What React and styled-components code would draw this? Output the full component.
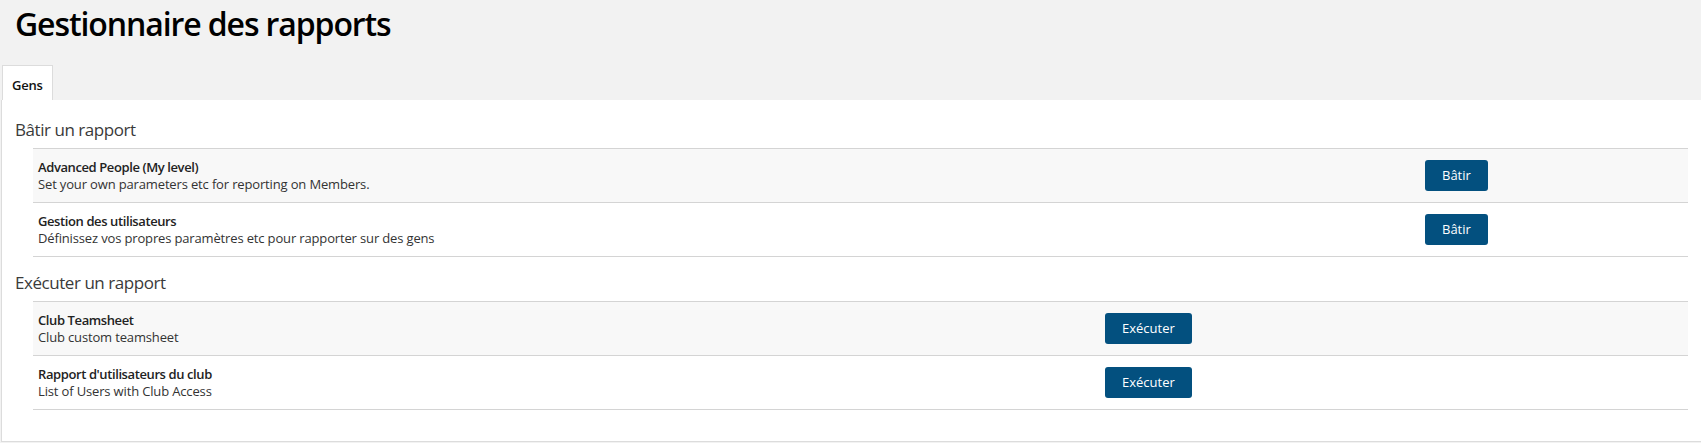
import React from "react";
import styled, { createGlobalStyle } from "styled-components";

const GlobalStyle = createGlobalStyle`
  html, body {
    margin: 0;
    padding: 0;
    background: #ffffff;
  }
  body {
    font-family: "Open Sans", "Noto Sans", "Liberation Sans", sans-serif;
    color: #333333;
    -webkit-font-smoothing: antialiased;
  }
  * { box-sizing: border-box; }
`;

const Page = styled.div`
  width: 1701px;
  min-height: 443px;
  background: #f2f2f2;
  padding-left: 1px;
`;

const Header = styled.header`
  padding: 0 14px;
  margin-bottom: 17px;
`;

const Title = styled.h1`
  margin: 0;
  font-size: 32px;
  line-height: 48px;
  font-weight: 600;
  color: #000000;
  letter-spacing: -1.1px;
`;

const TabBar = styled.div`
  display: flex;
  padding-left: 1px;
`;

const Tab = styled.button`
  height: 35px;
  padding: 10px 9px 6px;
  border: 1px solid #dcdcdc;
  border-bottom: none;
  background: ${(p) => (p.$active ? "#ffffff" : "transparent")};
  font-family: inherit;
  font-size: 13px;
  line-height: 18px;
  font-weight: 600;
  color: #111111;
  letter-spacing: -0.2px;
  cursor: pointer;
`;

const Panel = styled.main`
  background: #ffffff;
  border-left: 1px solid #dcdcdc;
  border-bottom: 1px solid #dcdcdc;
  padding: 4px 13px 31px 13px;
`;

const SectionTitle = styled.h2`
  margin: 14px 0 6px;
  font-size: 17px;
  line-height: 24px;
  font-weight: 400;
  color: #3a3a3a;
  letter-spacing: -0.45px;
`;

const List = styled.div`
  margin-left: 18px;
  border-bottom: 1px solid #d4d4d4;
`;

const Row = styled.div`
  display: grid;
  grid-template-columns: ${(p) => p.$labelWidth}px 1fr;
  align-items: center;
  border-top: 1px solid #d4d4d4;
  background: ${(p) => (p.$striped ? "#f8f8f8" : "#ffffff")};
  height: 54px;
`;

const Info = styled.div`
  padding: 0 5px;
`;

const ReportName = styled.div`
  font-size: 13px;
  line-height: 17px;
  font-weight: 600;
  color: #222222;
  letter-spacing: -0.4px;
`;

const ReportDesc = styled.div`
  font-size: 13px;
  line-height: 17px;
  font-weight: 400;
  color: #333333;
  letter-spacing: -0.15px;
`;

const Action = styled.div`
  padding-left: 5px;
  display: flex;
  align-items: center;
`;

const Button = styled.button`
  height: 31px;
  padding: 0 17px;
  border: none;
  border-radius: 3px;
  background: #03507f;
  color: #ffffff;
  font-family: inherit;
  font-size: 13px;
  line-height: 31px;
  font-weight: 400;
  cursor: pointer;
`;

const sections = [
  {
    title: "Bâtir un rapport",
    action: "Bâtir",
    labelWidth: 1387,
    reports: [
      {
        name: "Advanced People (My level)",
        desc: "Set your own parameters etc for reporting on Members.",
      },
      {
        name: "Gestion des utilisateurs",
        desc: "Définissez vos propres paramètres etc pour rapporter sur des gens",
      },
    ],
  },
  {
    title: "Exécuter un rapport",
    action: "Exécuter",
    labelWidth: 1067,
    reports: [
      { name: "Club Teamsheet", desc: "Club custom teamsheet" },
      {
        name: "Rapport d'utilisateurs du club",
        desc: "List of Users with Club Access",
      },
    ],
  },
];

export default function App() {
  return (
    <>
      <GlobalStyle />
      <Page>
        <Header>
          <Title>Gestionnaire des rapports</Title>
        </Header>
        <TabBar>
          <Tab $active>Gens</Tab>
        </TabBar>
        <Panel>
          {sections.map((s) => (
            <section key={s.title}>
              <SectionTitle>{s.title}</SectionTitle>
              <List>
                {s.reports.map((r, i) => (
                  <Row key={r.name} $striped={i % 2 === 0} $labelWidth={s.labelWidth}>
                    <Info>
                      <ReportName>{r.name}</ReportName>
                      <ReportDesc>{r.desc}</ReportDesc>
                    </Info>
                    <Action>
                      <Button>{s.action}</Button>
                    </Action>
                  </Row>
                ))}
              </List>
            </section>
          ))}
        </Panel>
      </Page>
    </>
  );
}
